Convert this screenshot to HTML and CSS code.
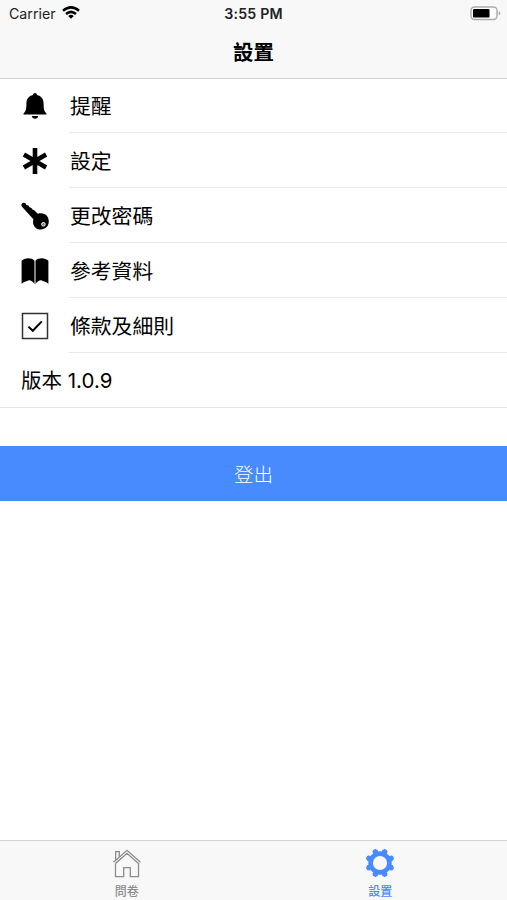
FILE: index.html
```
<!DOCTYPE html>
<html lang="zh-Hant">
<head>
<meta charset="utf-8">
<title>設置</title>
<link rel="stylesheet" href="styles.css">
</head>
<body>
<div class="app">
  <header class="header">
    <div class="status">
      <div class="carrier"><span>Carrier</span>
        <svg width="18" height="13" viewBox="0 0 18 13" fill="none" stroke="#000" stroke-width="2.5"><path d="M1 4.8Q9-2 17 4.8M4 8Q9 3.7 14 8"/><path d="M9 12.7 6.2 9.9Q9 7.6 11.8 9.9Z" fill="#000" stroke="none"/></svg>
      </div>
      <div class="time">3:55 PM</div>
      <div class="power"><svg width="31" height="15" viewBox="0 0 31 15"><rect x="1" y="1" width="26" height="12.5" rx="3.5" fill="#fff" stroke="#aaa" stroke-width="1.4"/><rect x="3" y="3" width="16.5" height="8.6" rx="1.2"/><path d="M28.7 5v4.5q1.600-.6 1.600-2.200T28.700 5" fill="#aaa"/></svg></div>
    </div>
    <h1 class="title">設置</h1>
  </header>
  <main class="content">
    <ul class="list">
      <li class="item">
        <svg class="icon" viewBox="0 0 28 28"><path d="M14 1c1.200 0 2 .8 2 2 4.300 1 6.600 4 6.600 8.500 0 5.500.4 7.500 3 10.200V22.500H2.400V21.700c2.600-2.700 3-4.700 3-10.200C5.400 7 7.700 4 12 3c0-1.200.8-2 2-2zM10.800 24h6.400c-.3 1.700-1.500 2.700-3.200 2.700s-2.900-1-3.200-2.700z"/></svg>
        <div class="label">提醒</div>
      </li>
      <li class="item">
        <svg class="icon" viewBox="0 0 28 28"><path d="M14 1v26M2.900 7.600l22.200 12.800M2.900 20.400 25.100 7.600" stroke="#000" stroke-width="4.600"/></svg>
        <div class="label">設定</div>
      </li>
      <li class="item">
        <svg class="icon" viewBox="0 0 28 28"><path d="M.5 2.200C1 .6 3.500.1 4.600 1.300l.8 1.600 2 .7 1.300 1.700 1.700.6 1.100 1.600 1.700.7 3.600 3.600c3.600-1.100 7.200-.2 9.200 2.300 2.500 3.200 2.400 8-.4 11-3.100 3.200-8.200 3.300-11.300.3-2.300-2.300-2.700-5-1.900-8.100L1.700 5.500C.5 4.500.1 3.400.5 2.200z"/><circle cx="22.400" cy="22.300" r="1.800" fill="#777" stroke="#fff" stroke-width="1"/></svg>
        <div class="label">更改密碼</div>
      </li>
      <li class="item">
        <svg class="icon" viewBox="0 0 28 28"><path d="M.6 3.700C3.600.6 10.400.300 13.500 3.700v23.400C11.300 23.700 8.500 22.800 6.900 23.700 4.800 24.200 3 24.800.6 26.700zM14.500 3.700C17.600.3 24.400.6 27.400 3.700v23c-2.400-1.900-4.200-2.500-6.300-3-1.600-.9-4.400 0-6.600 3.400z"/></svg>
        <div class="label">參考資料</div>
      </li>
      <li class="item">
        <svg class="icon" viewBox="0 0 28 28" fill="none" stroke="#000"><rect x="1.500" y="1.500" width="25" height="25" stroke="#333" stroke-width="1.500"/><path d="m7.400 14.600 4.400 4.200 9-9.400" stroke-width="2"/></svg>
        <div class="label">條款及細則</div>
      </li>
      <li class="item version">版本 1.0.9</li>
    </ul>
    <button class="logout">登出</button>
  </main>
  <nav class="tabs">
    <a class="tab">
      <svg viewBox="0 0 30 30" fill="none" stroke="#8c8c8c" stroke-width="1.300"><path d="M1.500 14.200 15 2.300l13.500 11.900M3.500 15.500v13.100h8.200v-9h6.600v9h8.200V15.500L15 5.300 3.500 15.500M3.700 12V3.700h3.600v5"/></svg>
      <span>問卷</span>
    </a>
    <a class="tab active">
      <svg viewBox="0 0 30 30" fill="none" stroke="#488aff"><circle cx="15" cy="15" r="9.400" stroke-width="4.600"/><path d="M9.850 2.570 20.150 27.430M20.150 2.570 9.850 27.430M2.570 9.850 27.430 20.150M2.570 20.150 27.430 9.850" stroke-width="5.400" stroke-dasharray="4 18.910"/><path d="M8.650 2.800 10.600 1.900M21.350 2.800 19.400 1.900M27.200 8.650 28.100 10.600M27.200 21.350 28.100 19.400M21.350 27.200 19.400 28.100M8.650 27.200 10.600 28.100M2.800 21.350 1.900 19.400M2.800 8.650 1.900 10.600" stroke-width="1.800" stroke-linecap="round"/></svg>
      <span>設置</span>
    </a>
  </nav>
</div>
</body>
</html>
```
FILE: styles.css
```
* { box-sizing: border-box; }
body {
  margin: 0;
  background: #fff;
  color: #000;
  font-family: Inter, "Noto Sans CJK TC", sans-serif;
}
.app {
  display: flex;
  flex-direction: column;
  height: 900px;
}
.header {
  height: 79px;
  background: #f8f8f8;
  border-bottom: 1px solid #d4d4d4;
}
.status {
  display: grid;
  grid-template-columns: 1fr auto 1fr;
  align-items: center;
  height: 27px;
  padding: 0 6px 0 9px;
}
.carrier {
  display: flex;
  align-items: center;
  gap: 6px;
  font-size: 14.200px;
  color: #222;
}
.carrier svg { margin-top: -2px; }
.time {
  margin-right: 3px;
  font-size: 14.200px;
  letter-spacing: .2px;
  font-weight: 600;
  color: #222;
}
.power {
  display: flex;
  justify-content: flex-end;
}
.title {
  margin: 0;
  height: 51px;
  font-size: 20.500px;
  line-height: 52px;
  font-weight: 700;
  text-align: center;
}
.content { flex: 1; }
.list {
  margin: 0;
  padding: 0;
  list-style: none;
}
.item {
  display: flex;
  align-items: flex-start;
  height: 55px;
  padding-left: 21px;
  font-size: 20.800px;
}
.icon {
  flex: none;
  width: 28px;
  height: 28px;
  margin: 13px 20px 0 0;
}
.label {
  flex: 1;
  height: 54px;
  padding-left: 1px;
  line-height: 56px;
  border-bottom: 1px solid #e8e8e8;
}
.version {
  height: 54px;
  line-height: 54px;
  border-bottom: 1px solid #e3e3e3;
  font-size: 20.500px;
}
.logout {
  display: block;
  width: 100%;
  height: 55px;
  margin-top: 38px;
  padding: 0;
  border: 0;
  background: #488aff;
  color: #fff;
  font: 300 19.500px/58px Inter, "Noto Sans CJK TC", sans-serif;
}
.tabs {
  display: flex;
  height: 60px;
  background: #f8f8f8;
  border-top: 1px solid #d4d4d4;
}
.tab {
  flex: 1;
  display: flex;
  flex-direction: column;
  align-items: center;
  padding-top: 7px;
  font-size: 12px;
  font-weight: 500;
  line-height: 14px;
  color: #8c8c8c;
}
.tab svg {
  flex: none;
  width: 30px;
  height: 30px;
}
.tab span { margin-top: 7px; }
.active { color: #488aff; }
```
